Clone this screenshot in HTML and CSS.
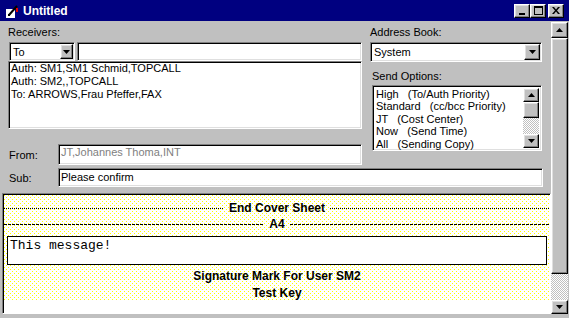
FILE: index.html
```html
<!DOCTYPE html>
<html lang="en">
<head>
    <meta charset="UTF-8">
    <title>Untitled</title>
    <link rel="stylesheet" href="styles.css">
</head>
<body>
    <div class="window">
        <div class="titlebar">
            <svg class="app-icon" width="14" height="14" viewBox="0 0 14 14">
                <path d="M1 5h9v9H1z" fill="#fff"/>
                <path d="M4 11L12 2" stroke="#000" stroke-width="2"/>
                <rect x="11" y="4" width="2" height="4" fill="#e00000"/>
                <rect x="3" y="10" width="2" height="2" fill="#000"/>
            </svg>
            <span class="title">Untitled</span>
            <div class="caption-buttons">
                <span class="cap-btn"><svg width="8" height="8" viewBox="0 0 8 8"><rect x="1" y="6" width="6" height="2" fill="#000"/></svg></span>
                <span class="cap-btn"><svg width="9" height="9" viewBox="0 0 9 9"><path d="M0 0h9v9H0z M1 2v6h7V2z" fill="#000" fill-rule="evenodd"/></svg></span>
                <span class="cap-btn close"><svg width="8" height="7" viewBox="0 0 8 7"><path d="M0 0h2l2 2.5L6 0h2L5 3.5 8 7H6L4 4.5 2 7H0l3-3.5z" fill="#000"/></svg></span>
            </div>
        </div>

        <div class="frame">
            <div class="client">
                <div class="top">
                    <div class="left-col">
                        <div class="label">Receivers:</div>
                        <div class="recv-row">
                            <div class="combo combo-to">
                                <span class="combo-text">To</span>
                                <span class="drop-btn small"><svg width="7" height="4" viewBox="0 0 7 4"><path d="M0 0h7L3.5 4z" fill="#000"/></svg></span>
                            </div>
                            <div class="field recv-input"></div>
                        </div>
                        <div class="field listbox recv-list">
                            <div>Auth: SM1,SM1 Schmid,TOPCALL</div>
                            <div>Auth: SM2,,TOPCALL</div>
                            <div>To: ARROWS,Frau Pfeffer,FAX</div>
                        </div>
                        <div class="form-row from-row">
                            <span class="row-label">From:</span>
                            <div class="field from-field">JT,Johannes Thoma,INT</div>
                        </div>
                    </div>

                    <div class="right-col">
                        <div class="label">Address Book:</div>
                        <div class="combo combo-book">
                            <span class="combo-text">System</span>
                            <span class="drop-btn"><svg width="7" height="4" viewBox="0 0 7 4"><path d="M0 0h7L3.5 4z" fill="#000"/></svg></span>
                        </div>
                        <div class="label send-label">Send Options:</div>
                        <div class="field listbox opt-list">
                            <div class="opt-items">
                                <div class="opt">High   (To/Auth Priority)</div>
                                <div class="opt">Standard   (cc/bcc Priority)</div>
                                <div class="opt">JT   (Cost Center)</div>
                                <div class="opt">Now   (Send Time)</div>
                                <div class="opt">All   (Sending Copy)</div>
                            </div>
                            <div class="mini-scroll">
                                <span class="sb-btn mini-up"><svg width="7" height="4" viewBox="0 0 7 4"><path d="M0 4h7L3.5 0z" fill="#000"/></svg></span>
                                <span class="sb-thumb mini-thumb"></span>
                                <span class="sb-track"></span>
                                <span class="sb-btn mini-down"><svg width="7" height="4" viewBox="0 0 7 4"><path d="M0 0h7L3.5 4z" fill="#000"/></svg></span>
                            </div>
                        </div>
                    </div>
                </div>

                <div class="form-row sub-row">
                    <span class="row-label">Sub:</span>
                    <div class="field sub-field">Please confirm</div>
                </div>

                <div class="document">
                    <div class="cover">
                        <div class="rule dotted"><span class="rule-text">End Cover Sheet</span></div>
                        <div class="rule dashed"><span class="rule-text">A4</span></div>
                        <div class="message">This message!</div>
                        <div class="mark">Signature Mark For User SM2</div>
                        <div class="mark">Test Key</div>
                    </div>
                </div>
            </div>

            <div class="vscroll">
                <span class="sb-btn up"><svg width="7" height="4" viewBox="0 0 7 4"><path d="M0 4h7L3.5 0z" fill="#000"/></svg></span>
                <span class="sb-thumb main-thumb"></span>
                <span class="sb-track"></span>
                <span class="sb-btn down"><svg width="7" height="4" viewBox="0 0 7 4"><path d="M0 0h7L3.5 4z" fill="#000"/></svg></span>
            </div>
        </div>
    </div>
</body>
</html>
```

FILE: styles.css
```css
* {
    box-sizing: border-box;
}
body {
    margin: 0;
    background: #c0c0c0;
    font-family: "Liberation Sans", Arial, sans-serif;
    font-size: 11px;
    color: #000;
}
.window {
    width: 569px;
    height: 318px;
    background: #c0c0c0;
    overflow: hidden;
}

/* title bar */
.titlebar {
    height: 21px;
    background: #000080;
    color: #fff;
    display: flex;
    align-items: center;
    padding: 0 5px 0 5px;
}
.app-icon {
    flex: none;
}
.title {
    margin-left: 4px;
    font-weight: bold;
    font-size: 12px;
}
.caption-buttons {
    margin-left: auto;
    display: flex;
}
.cap-btn,
.drop-btn,
.sb-btn,
.sb-thumb {
    background: #c0c0c0;
    border: 1px solid;
    border-color: #fff #000 #000 #fff;
    box-shadow: inset -1px -1px #808080, inset 1px 1px #dfdfdf;
}
.cap-btn {
    width: 16px;
    height: 14px;
    display: flex;
    align-items: center;
    justify-content: center;
}
.cap-btn svg {
    display: block;
}
.cap-btn.close {
    margin-left: 2px;
}

/* main frame */
.frame {
    display: flex;
    height: 297px;
}
.client {
    width: 551px;
    flex: none;
}
.top {
    display: flex;
    padding: 5px 0 0 8px;
}
.left-col {
    width: 354px;
}
.right-col {
    width: 172px;
    margin-left: 8px;
}
.label {
    height: 13px;
    line-height: 13px;
    margin-bottom: 3px;
}
.send-label {
    margin: 8px 0 2px 2px;
}

/* sunken controls */
.field,
.combo {
    background: #fff;
    border: 1px solid;
    border-color: #808080 #fff #fff #808080;
    box-shadow: inset 1px 1px #000, inset -1px -1px #dfdfdf;
}
.combo {
    display: flex;
    padding: 1px;
}
.combo-text {
    flex: 1;
    padding-left: 2px;
    line-height: 16px;
}
.drop-btn {
    width: 16px;
    flex: none;
    display: flex;
    align-items: center;
    justify-content: center;
}
.drop-btn.small {
    width: 13px;
}
.recv-row {
    display: flex;
    height: 19px;
}
.combo-to {
    width: 66px;
    margin: 0 2px 0 1px;
}
.recv-input {
    flex: 1;
}
.listbox {
    padding: 0 2px;
    line-height: 13px;
}
.recv-list {
    height: 68px;
}
.combo-book {
    height: 20px;
}
.opt-list {
    display: flex;
    width: 170px;
    height: 66px;
    margin-left: 2px;
    padding: 2px;
}
.opt-items {
    flex: 1;
    line-height: 12.4px;
    padding-left: 1px;
}
.opt {
    white-space: pre;
}
.mini-scroll {
    width: 16px;
    display: flex;
    flex-direction: column;
}
.sb-btn {
    display: flex;
    align-items: center;
    justify-content: center;
    flex: none;
}
.mini-up {
    height: 14px;
}
.mini-thumb {
    height: 16px;
}
.mini-down {
    height: 14px;
}
.sb-track {
    flex: 1;
    background-color: #fff;
    background-image: conic-gradient(#c0c0c0 25%, #fff 0 50%, #c0c0c0 0 75%, #fff 0);
    background-size: 2px 2px;
}

/* from / sub rows */
.form-row {
    display: flex;
    align-items: center;
}
.row-label {
    width: 50px;
    flex: none;
    padding-left: 1px;
}
.from-row {
    margin-top: 15px;
    height: 21px;
}
.from-field {
    flex: 1;
    height: 21px;
    color: #808080;
    padding: 1px 2px 0 2px;
    line-height: 13px;
}
.sub-row {
    margin-top: 3px;
    padding-left: 8px;
    height: 19px;
}
.sub-field {
    width: 485px;
    height: 19px;
    padding: 0 2px;
    line-height: 17px;
}

/* document area */
.document {
    margin: 6px 0 0 2px;
    width: 549px;
    height: 121px;
    background: #fff;
    border: 1px solid;
    border-color: #808080 #fff #fff #808080;
    box-shadow: inset 1px 1px #000;
    padding: 1px 0 0 1px;
}
.cover {
    height: 106px;
    padding-top: 5px;
    background-color: #fff;
    background-image: url("data:image/svg+xml,%3Csvg xmlns='http://www.w3.org/2000/svg' width='4' height='4' shape-rendering='crispEdges'%3E%3Crect x='0' y='0' width='1' height='1' fill='%23ffff00'/%3E%3Crect x='2' y='2' width='1' height='1' fill='%23ffff00'/%3E%3C/svg%3E");
    background-size: 4px 4px;
}
.rule {
    display: flex;
    align-items: center;
    height: 16px;
    font-weight: bold;
    font-size: 12px;
}
.rule::before,
.rule::after {
    content: "";
    flex: 1;
    height: 1px;
}
.dotted::before,
.dotted::after {
    background: repeating-linear-gradient(90deg, #000 0 1px, transparent 1px 2px);
}
.dashed::before,
.dashed::after {
    background: repeating-linear-gradient(90deg, #000 0 3px, transparent 3px 4px);
}
.rule-text {
    padding: 0 5px;
}
.message {
    margin: 4px 3px 0 3px;
    height: 29px;
    background: #fff;
    border: 1px solid #000;
    font-family: "Liberation Mono", "Courier New", monospace;
    font-size: 13px;
    line-height: 15px;
    padding: 1px 2px;
}
.mark {
    height: 17px;
    line-height: 17px;
    text-align: center;
    font-weight: bold;
    font-size: 12px;
}
.message + .mark {
    margin-top: 3px;
}

/* window scrollbar */
.vscroll {
    width: 17px;
    height: 292px;
    margin-top: 1px;
    display: flex;
    flex-direction: column;
}
.vscroll .up {
    height: 16px;
}
.main-thumb {
    height: 236px;
    flex: none;
}
.vscroll .down {
    height: 14px;
}
```
